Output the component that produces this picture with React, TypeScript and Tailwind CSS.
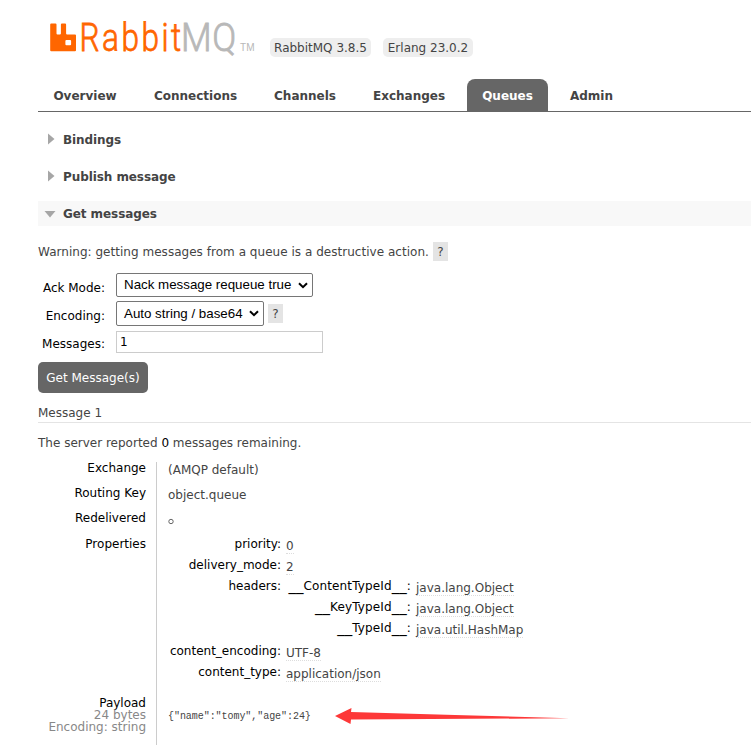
import React from "react";

const tabs = [
  { name: "Overview", width: "w-[94px]" },
  { name: "Connections", width: "w-[113px]" },
  { name: "Channels", width: "w-[92px]" },
  { name: "Exchanges", width: "w-[102px]" },
  { name: "Queues", width: "w-[81px]", active: true },
  { name: "Admin", width: "w-[73px]" },
];

const props = [
  { k: "priority:", v: "0", h: "h-[21px]" },
  { k: "delivery_mode:", v: "2", h: "h-[21px]" },
  {
    k: "headers:",
    h: "h-[65px]",
    table: [
      { k: "ContentTypeId", v: "java.lang.Object", h: "h-[21px]" },
      { k: "KeyTypeId", v: "java.lang.Object", h: "h-[21px]" },
      { k: "TypeId", v: "java.util.HashMap", h: "h-[21px]" },
    ],
  },
  { k: "content_encoding:", v: "UTF-8", h: "h-[21px]" },
  { k: "content_type:", v: "application/json", h: "h-[21px]" },
];

function Logo() {
  return (
    <svg width="210" height="42" viewBox="0 0 210 42" className="block shrink-0 overflow-visible">
      <path
        fill="#ff6600"
        d="M1.2 3.5h4.3a1 1 0 0 1 1 1v9a1 1 0 0 0 1 1h2.4a1 1 0 0 0 1-1v-9a1 1 0 0 1 1-1h3.2a1 1 0 0 1 1 1v9a1 1 0 0 0 1 1H25a1 1 0 0 1 1 1v14.8a1 1 0 0 1-1 1H1.2a1 1 0 0 1-1-1V4.5a1 1 0 0 1 1-1zM16.400 20a1 1 0 0 0-1 1v3.300a1 1 0 0 0 1 1h3.700a1 1 0 0 0 1-1v-3.300a1 1 0 0 0-1-1z"
        fillRule="evenodd"
      />
      <g fontWeight="300" fontSize="38.500" strokeWidth="0.800" className="font-[Roboto,sans-serif]">
        <text transform="translate(29.500 31) scale(0.82 1)" fill="#ff6600" stroke="#ff6600" textLength="124" lengthAdjust="spacing">
          Rabbit
        </text>
        <text transform="translate(131 31) scale(0.92 1)" fill="#b8b8b8" stroke="#b8b8b8" textLength="60" lengthAdjust="spacing">
          MQ
        </text>
      </g>
      <text x="190" y="31.300" fill="#b8b8b8" fontSize="10.500" textLength="14.500" lengthAdjust="spacingAndGlyphs" className="font-['Liberation_Sans',Arial,sans-serif]">
        TM
      </text>
    </svg>
  );
}

function Help() {
  return (
    <span className="h-[19px] w-[15px] shrink-0 bg-[#e4e4e4] pt-[3px] text-center text-[#444]">?</span>
  );
}

function Select({ label, className }: { label: string; className: string }) {
  return (
    <div className={`flex shrink-0 items-center justify-between rounded-[2px] border border-[#767676] bg-white pr-[4px] pl-[7px] font-['Liberation_Sans',Arial,sans-serif] text-[13.333px] text-black ${className}`}>
      <span className="whitespace-nowrap">{label}</span>
      <svg width="10" height="7" viewBox="0 0 10 7" fill="none">
        <path d="M1 1.200 5 5.200 9 1.200" stroke="#000" strokeWidth="2" />
      </svg>
    </div>
  );
}

function Value({ children }: { children: React.ReactNode }) {
  return (
    <span className="mt-[2px] h-[15px] border-b border-dotted border-[#ddd] text-[#444]">{children}</span>
  );
}

function Wide() {
  return <span className="text-[15px] leading-[0] tracking-normal">__</span>;
}

export default function App() {
  return (
    <div className="h-[754px] w-[751px] overflow-hidden bg-white pl-[38px] font-['DejaVu_Sans',Verdana,sans-serif] text-[12px] leading-[14px] whitespace-nowrap text-[#444]">
      <header className="flex h-[79px] items-start pt-[20px] pl-[12px]">
        <Logo />
        <span className="mt-[18px] ml-[10px] h-[19px] w-[101px] rounded-[5px] bg-[#eee] pt-[3px] text-center">RabbitMQ 3.8.5</span>
        <span className="mt-[18px] ml-[12px] h-[19px] w-[90px] rounded-[5px] bg-[#eee] pt-[3px] text-center">Erlang 23.0.2</span>
      </header>

      <nav className="flex h-[33px] gap-[7px] border-b border-[#666]">
        {tabs.map((t) => (
          <a key={t.name} className={`flex justify-center rounded-t-[8px] pt-[10px] font-bold ${t.width} ${t.active ? "bg-[#666] text-white" : "text-[#444]"}`}>
            {t.name}
          </a>
        ))}
      </nav>

      <section className="mt-[15px] tracking-[-0.08px]">
        {["Bindings", "Publish message"].map((s) => (
          <h2 key={s} className="mb-[12px] flex h-[25px] items-start pt-[6px] pl-[10px] font-bold">
            <svg width="7" height="12" viewBox="0 0 7 12">
              <path d="M0 0.500v11L6.500 6z" fill="#a6a6a6" />
            </svg>
            <span className="ml-[8px]">{s}</span>
          </h2>
        ))}
        <h2 className="flex h-[25px] items-start bg-[#f8f8f8] pt-[6px] pl-[6px] font-bold">
          <svg width="12" height="7" viewBox="0 0 12 7" className="mt-[4px]">
            <path d="M0.500 0h11L6 6.500z" fill="#a6a6a6" />
          </svg>
          <span className="ml-[7px]">Get messages</span>
        </h2>
      </section>

      <p className="mt-[16px] flex h-[19px]">
        <span className="w-[395px] pt-[3px] tracking-[0.03px]">Warning: getting messages from a queue is a destructive action.</span>
        <Help />
      </p>

      <form className="mt-[12px]">
        <div className="flex h-[28px]">
          <label className="mr-[11px] w-[67px] pt-[8px] text-right text-black">Ack Mode:</label>
          <Select label="Nack message requeue true" className="h-[24px] w-[197px]" />
        </div>
        <div className="flex h-[30px]">
          <label className="mr-[11px] w-[67px] pt-[8px] text-right text-black">Encoding:</label>
          <Select label="Auto string / base64" className="mr-[4px] h-[25px] w-[148px]" />
          <div className="flex pt-[3px]">
            <Help />
          </div>
        </div>
        <div className="flex h-[31px]">
          <label className="mr-[11px] w-[67px] pt-[6px] text-right text-black">Messages:</label>
          <div className="h-[22px] w-[207px] border border-[#ccc] pt-[3px] pl-[3px] text-black">1</div>
        </div>
        <button type="button" className="block h-[31px] w-[110px] rounded-[5px] bg-[#666] text-white">Get Message(s)</button>
      </form>

      <h3 className="mt-[13px] h-[17px] border-b border-[#e4e4e4]">Message 1</h3>
      <p className="mt-[13px] h-[14px]">
        The server reported <span className="text-black">0</span> messages remaining.
      </p>

      <div className="mt-[12px] flex h-[283px]">
        <div className="w-[119px] border-r border-[#ccc] pr-[10px] text-right text-black">
          <div className="mt-[-1px] h-[25px]">Exchange</div>
          <div className="h-[25px]">Routing Key</div>
          <div className="h-[26px]">Redelivered</div>
          <div className="h-[160px]">Properties</div>
          <div className="leading-[12px]">
            <div>Payload</div>
            <div className="text-[#888]">24 bytes</div>
            <div className="text-[#888]">Encoding: string</div>
          </div>
        </div>
        <div className="pl-[11px]">
          <div className="h-[25px] pt-[1px]">(AMQP default)</div>
          <div className="h-[25px] pt-[1px]">object.queue</div>
          <div className="flex h-[25px] pt-[6px]">
            <svg width="7" height="7" viewBox="0 0 7 7" fill="none">
              <circle cx="3" cy="3.500" r="2.200" stroke="#666" />
            </svg>
          </div>
          <div className="h-[170px]">
            {props.map((p) => (
              <div key={p.k} className={`flex ${p.h}`}>
                <span className="mr-[5px] w-[113px] text-right text-black">{p.k}</span>
                {p.v && <Value>{p.v}</Value>}
                {p.table && (
                  <div>
                    {p.table.map((r) => (
                      <div key={r.k} className={`flex ${r.h}`}>
                        <span className="mr-[5px] w-[125px] text-right tracking-[0.15px] text-black">
                          <Wide />
                          {r.k}
                          <Wide />:
                        </span>
                        <Value>{r.v}</Value>
                      </div>
                    ))}
                  </div>
                )}
              </div>
            ))}
          </div>
          <div className="flex h-[18px]">
            <pre className="w-[167px] pt-[3px] font-['Liberation_Mono',monospace] text-[10px] leading-[14px] tracking-[-0.05px]">{'{"name":"tomy","age":24}'}</pre>
            <svg width="236" height="18" viewBox="0 0 236 18">
              <path d="M0 9 16.500 1 16 5 120 8 234 11.300 16 12.500 15.500 17z" fill="#fd3838" />
            </svg>
          </div>
        </div>
      </div>
    </div>
  );
}
